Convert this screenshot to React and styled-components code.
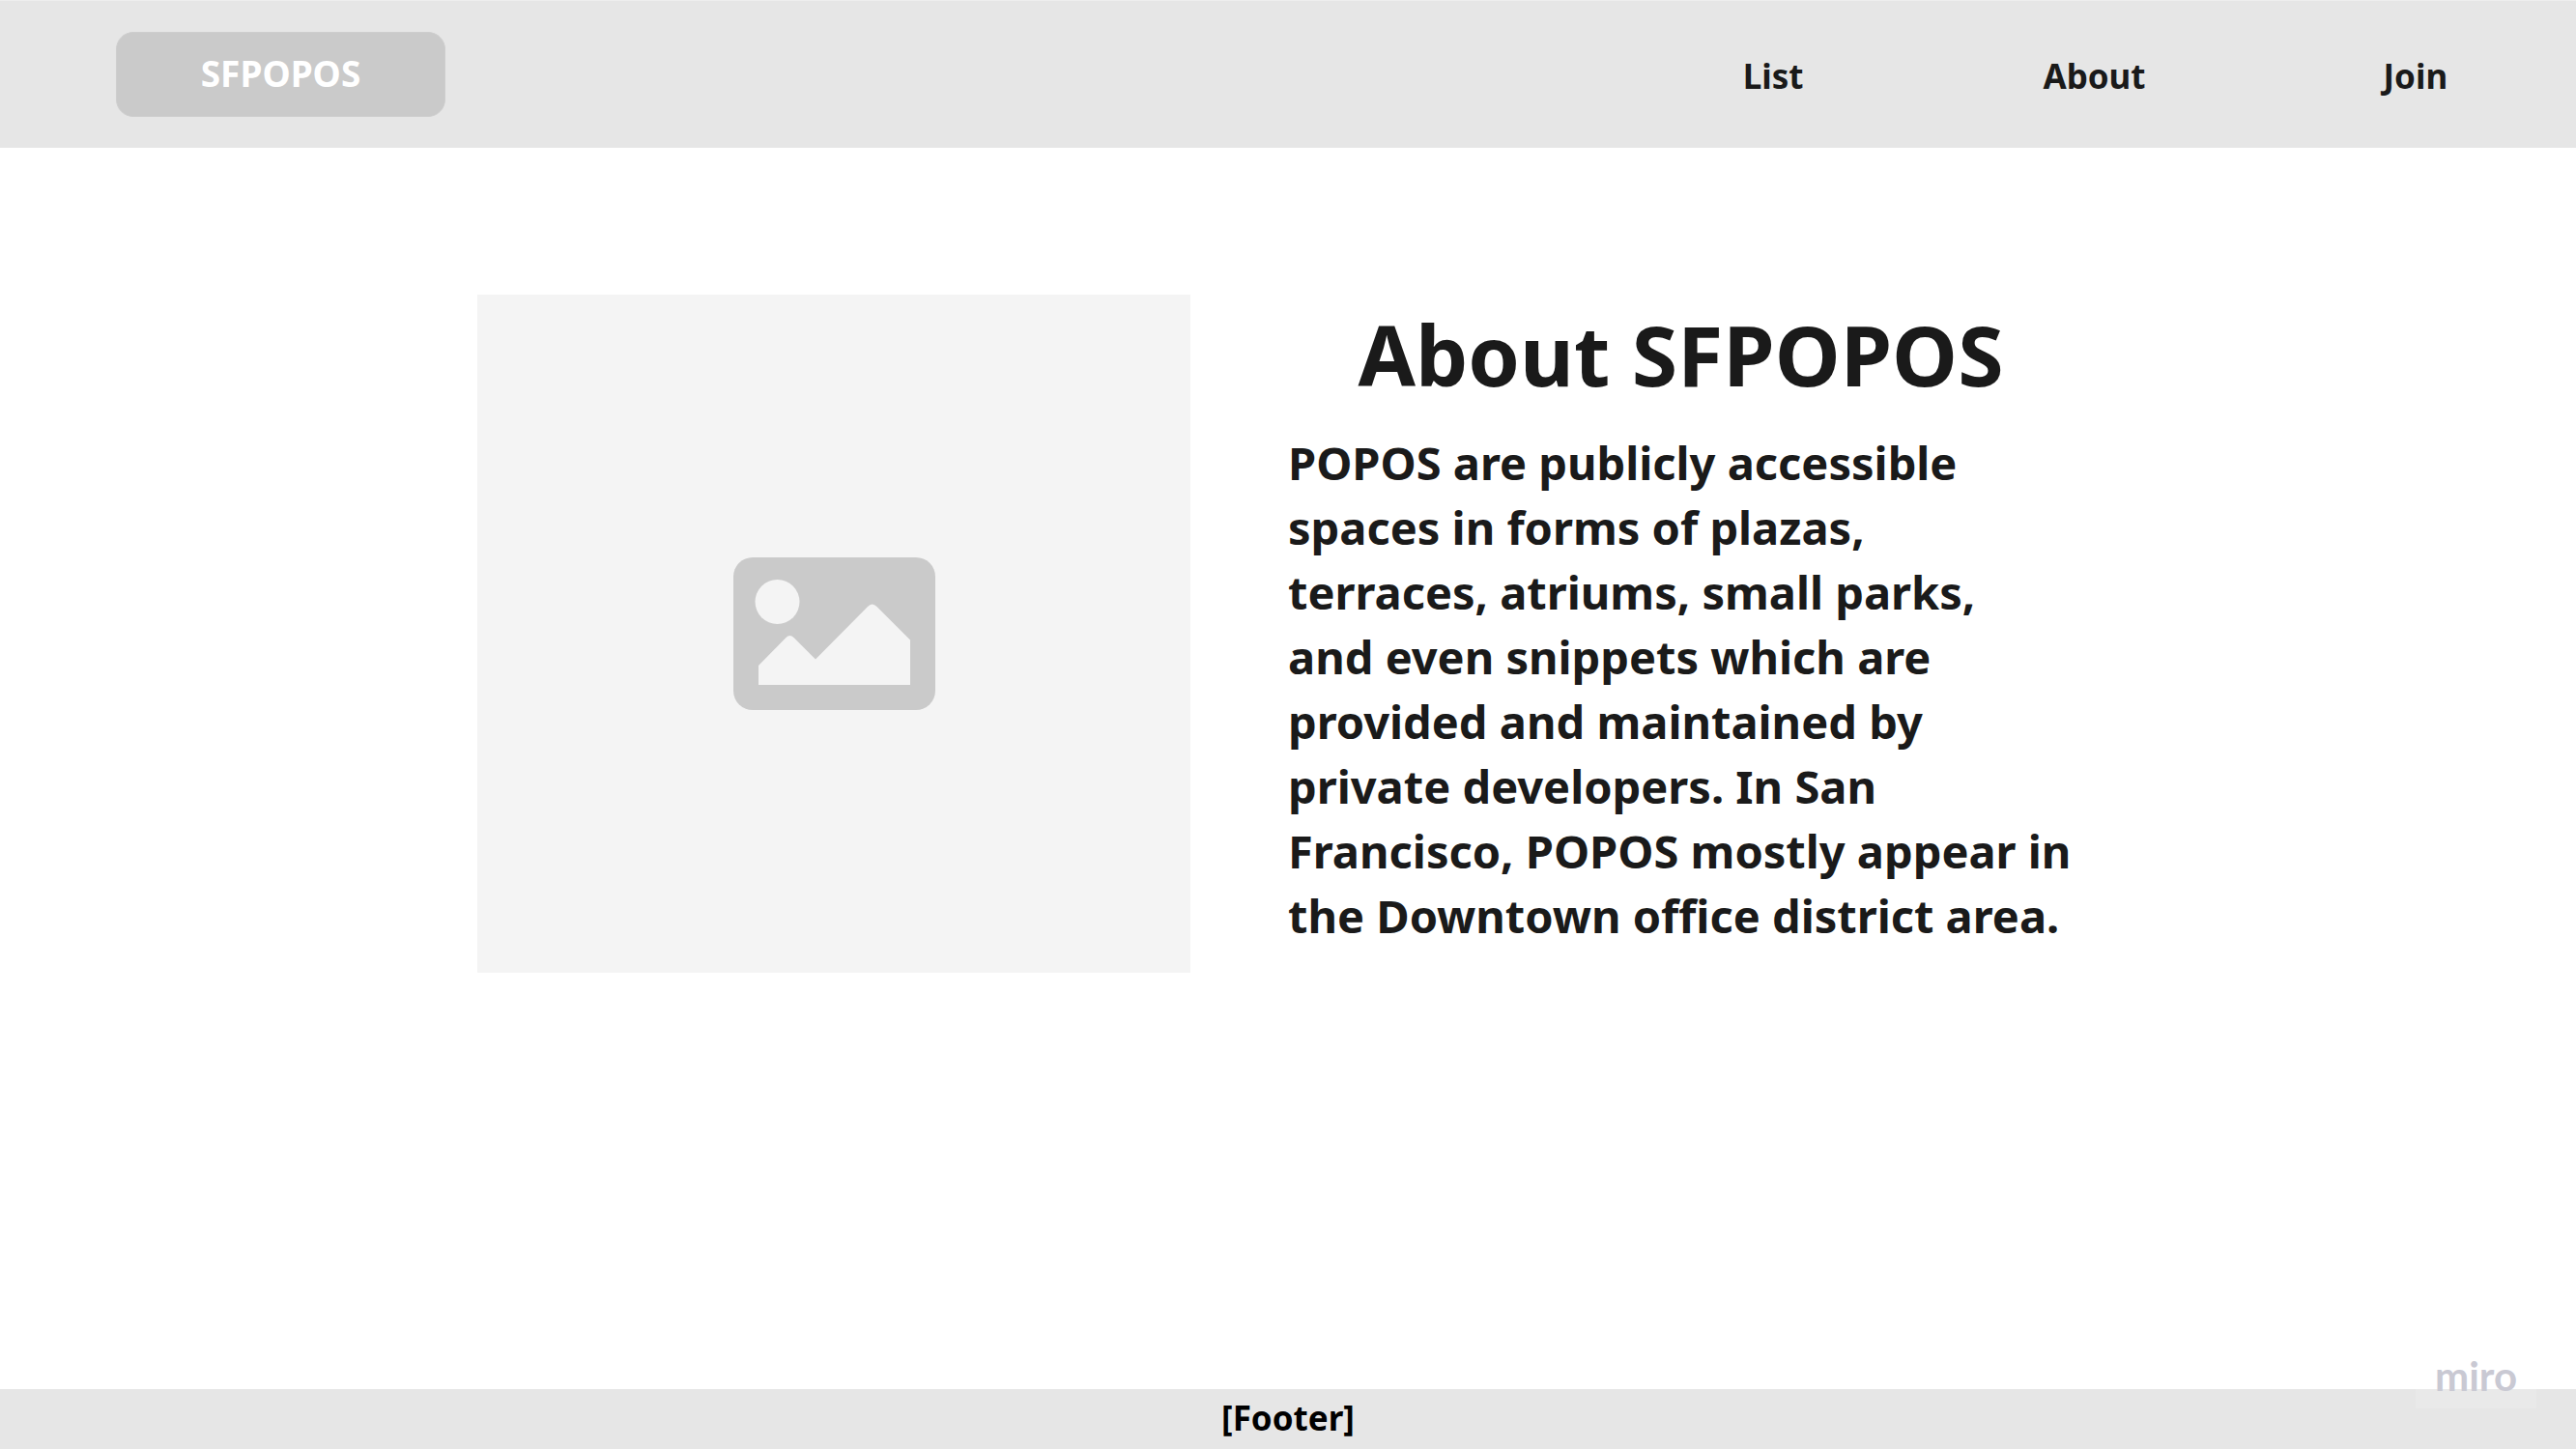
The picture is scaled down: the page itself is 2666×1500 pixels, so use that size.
import React from "react";
import styled, { createGlobalStyle } from "styled-components";

const GlobalStyle = createGlobalStyle`
  *, *::before, *::after {
    box-sizing: border-box;
  }
  body {
    margin: 0;
    background: #ffffff;
    color: #1a1a1a;
    font-family: "Noto Sans", "Open Sans", sans-serif;
    font-weight: 700;
  }
`;

const Page = styled.div`
  position: relative;
  display: flex;
  flex-direction: column;
  min-height: 100vh;
`;

const Header = styled.header`
  display: flex;
  align-items: center;
  justify-content: space-between;
  padding: 32px 0 32px 120px;
  border-top: 1px solid #eeeeee;
  background: #e6e6e6;
`;

const LogoButton = styled.button`
  width: 341px;
  height: 88px;
  padding: 0 0 2px;
  border: 1px solid #cecece;
  border-radius: 18px;
  background: #cacaca;
  color: #ffffff;
  font: inherit;
  font-size: 37px;
  line-height: 48px;
  cursor: pointer;
`;

const Nav = styled.nav`
  display: grid;
  grid-template-columns: repeat(3, 1fr);
  width: min(997px, 60%);
  padding-top: 4px;
`;

const NavLink = styled.a`
  justify-self: center;
  color: inherit;
  font-size: 35px;
  line-height: 48px;
  text-decoration: none;
`;

const Main = styled.main`
  display: flex;
  flex: 1;
  align-items: flex-start;
  justify-content: center;
  gap: 101px;
  padding: 152px 32px 64px;
`;

const Placeholder = styled.div`
  display: flex;
  flex: 0 1 738px;
  align-items: center;
  justify-content: center;
  aspect-ratio: 738 / 702;
  background: #f4f4f4;
`;

const Article = styled.article`
  display: flex;
  flex: 0 1 839px;
  flex-direction: column;
  gap: 17px;
  padding-right: 26px;
`;

const Title = styled.h1`
  margin: 0;
  font-size: 86px;
  line-height: 124px;
  text-align: center;
`;

const Description = styled.p`
  margin: 0;
  font-size: 47px;
  line-height: 67px;
`;

const Footer = styled.footer`
  display: flex;
  justify-content: center;
  padding: 6px 0 8px;
  background: #e6e6e6;
  color: #000000;
  font-size: 35px;
  line-height: 48px;
`;

const Watermark = styled.div`
  position: absolute;
  right: 41px;
  bottom: 42px;
  width: 125px;
  height: 62px;
  background: rgba(255, 255, 255, 0.15);
  color: #c9c9d3;
  font-family: Lato, sans-serif;
  font-size: 42px;
  line-height: 56px;
  text-align: center;
`;

const links = ["List", "About", "Join"];

function PictureIcon() {
  return (
    <svg width="209" height="158" viewBox="0 0 209 158" aria-hidden="true">
      <rect width="209" height="158" rx="20" fill="#cacaca" />
      <circle cx="45.5" cy="46" r="23" fill="#f4f4f4" />
      <path
        d="M26 112 54.5 83Q58.5 79 62.5 83L85 105.500 139 51Q143.500 46 148.500 51L183 85.500V132H26Z"
        fill="#f4f4f4"
      />
    </svg>
  );
}

export default function App() {
  return (
    <>
      <GlobalStyle />
      <Page>
        <Header>
          <LogoButton type="button">SFPOPOS</LogoButton>
          <Nav aria-label="Main">
            {links.map((label) => (
              <NavLink key={label} href={`#${label.toLowerCase()}`}>
                {label}
              </NavLink>
            ))}
          </Nav>
        </Header>
        <Main>
          <Placeholder>
            <PictureIcon />
          </Placeholder>
          <Article>
            <Title>About SFPOPOS</Title>
            <Description>
              POPOS are publicly accessible spaces in forms of plazas, terraces,
              atriums, small parks,
              <br />
              and even snippets which are provided and maintained by private
              developers. In San Francisco, POPOS mostly appear in the Downtown
              office district area.
            </Description>
          </Article>
        </Main>
        <Footer>[Footer]</Footer>
        <Watermark>miro</Watermark>
      </Page>
    </>
  );
}
